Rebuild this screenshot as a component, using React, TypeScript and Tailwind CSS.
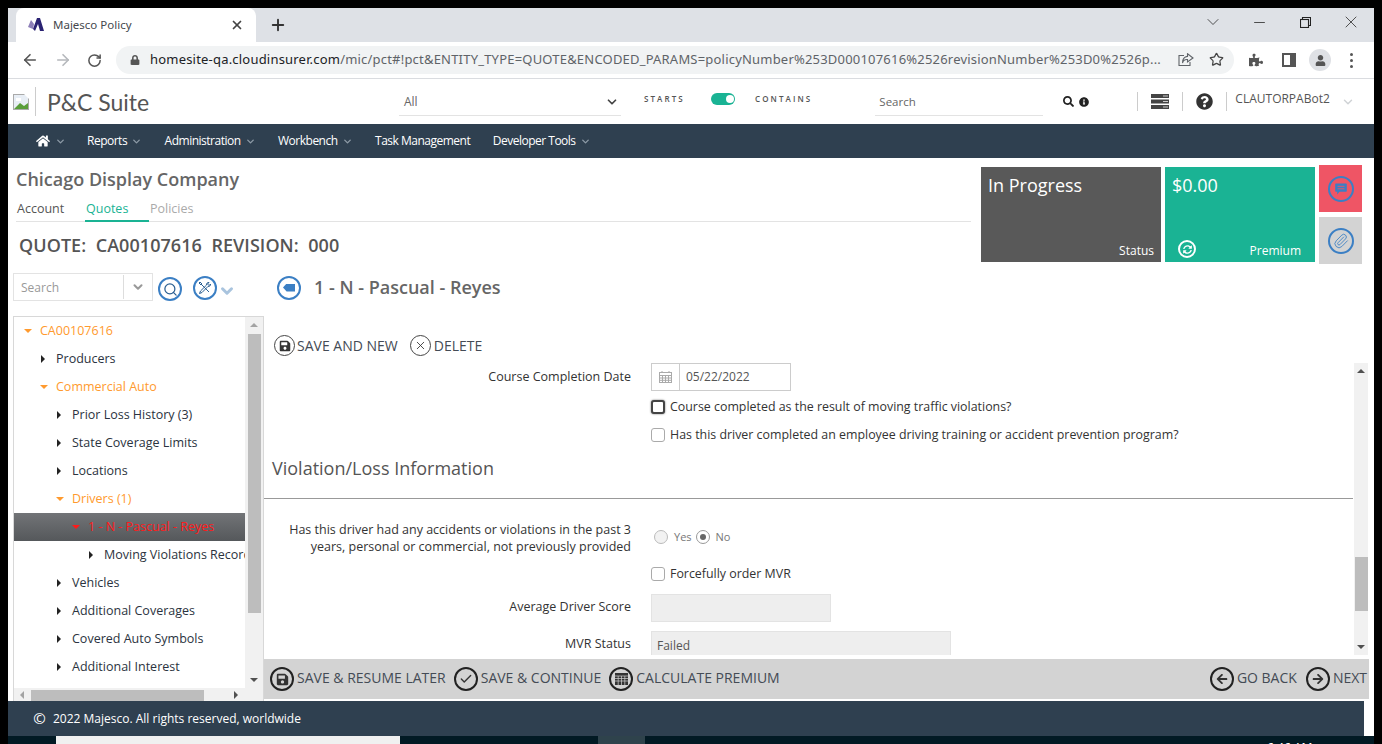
import type { ReactNode } from "react";
import { ArrowLeft, ArrowRight, ChevronDown, Minus, Paperclip, Plus, RotateCw, Star, X, Check, Search } from "lucide-react";
import { FaArrowLeft, FaArrowRight, FaHome, FaInfoCircle, FaLock, FaPuzzlePiece, FaQuestionCircle, FaSave, FaSearch, FaSyncAlt, FaUser } from "react-icons/fa";

const app = "font-['Open_Sans',sans-serif]";

function Caret({ open, color }: { open?: boolean; color?: string }) {
  if (open) {
    return <span className={`inline-block w-0 h-0 border-x-[4px] border-x-transparent border-t-[4px] ${color ?? "border-t-[#ff9a2e]"}`} />;
  }
  return <span className="inline-block w-0 h-0 border-y-[4px] border-y-transparent border-l-[4px] border-l-[#222]" />;
}

function TreeRow({ label, depth, open, active }: { label: string; depth: number; open?: boolean; active?: boolean }) {
  const pad = ["pl-[10px]", "pl-[26px]", "pl-[42px]", "pl-[58px]"][depth];
  const gap = open ? "w-[16px]" : "w-[16px] pl-[1px]";
  return (
    <div
      className={`h-[28px] flex items-center whitespace-nowrap ${pad} ${
        active
          ? "bg-gradient-to-b from-[#727477] to-[#55585b] text-[#ff1a1a]"
          : open
            ? "text-[#ff9a2e]"
            : "text-[#2b3340]"
      }`}
    >
      <span className={`${gap} shrink-0 flex items-center`}>
        <Caret open={open} color={active ? "border-t-[#ff1a1a]" : undefined} />
      </span>
      {label}
    </div>
  );
}

function RoundBtn({ children, label, small, className }: { children: ReactNode; label: string; small?: boolean; className?: string }) {
  return (
    <span className={`flex items-center text-[14px] text-[#444b55] whitespace-nowrap ${small ? "gap-[2px]" : "gap-[3px]"} ${className ?? ""}`}>
      <span
        className={`rounded-full flex items-center justify-center text-[#333] shrink-0 ${
          small ? "w-[21px] h-[21px] border-[1.5px] border-[#444]" : "w-[24px] h-[24px] border-[2.5px] border-[#222]"
        }`}
      >
        {children}
      </span>
      <span className={small ? "" : "pb-[4px]"}>{label}</span>
    </span>
  );
}

function BlueCircle({ children, size = "w-[24px] h-[24px]" }: { children: ReactNode; size?: string }) {
  return (
    <span className={`${size} rounded-full border-2 border-[#3b7fc4] flex items-center justify-center text-[#3b7fc4] shrink-0`}>
      {children}
    </span>
  );
}

function CheckRow({ label, focus }: { label: string; focus?: boolean }) {
  return (
    <div className="h-[28px] flex items-center gap-[5px] pl-[387px] text-[12.4px] text-[#333]">
      <span
        className={`w-[14px] h-[14px] rounded-[3px] bg-white ${
          focus ? "border-2 border-[#444] shadow-[0_0_2px_#666]" : "border border-[#aaa]"
        }`}
      />
      {label}
    </div>
  );
}

function NavItem({ label, caret = true }: { label: string; caret?: boolean }) {
  return (
    <span className="flex items-center gap-[4px] text-[12px] font-medium text-white whitespace-nowrap tracking-[-0.5px]">
      {label}
      {caret && <ChevronDown size={11} strokeWidth={3} className="text-[#8d9aa6]" />}
    </span>
  );
}

function BrowserChrome() {
  return (
    <div className="font-['Noto_Sans',sans-serif]">
      <div className="h-[34px] bg-[#dee1e6] flex items-end pl-2">
        <div className="w-[240px] h-[34px] bg-white rounded-t-lg flex items-center pl-[12px] pr-[12px] text-[11.5px] text-[#45484d]">
          <svg width="16" height="14" viewBox="0 0 16 14" className="mr-[9px]">
            <polygon points="0,9 3,2 6,6 5,11" fill="#8d7fb8" />
            <polygon points="5,11 9,0 12,0 16,13 12,13 10,6 7,13" fill="#2a2272" />
          </svg>
          <span className="flex-1">Majesco Policy</span>
          <X size={14} strokeWidth={3} className="text-[#444]" />
        </div>
        <Plus size={18} strokeWidth={2.5} className="text-[#333] ml-[13px] mb-[8px]" />
        <div className="flex-1" />
        <div className="flex items-center h-[34px] pb-[6px] text-[#333]">
          <ChevronDown size={20} strokeWidth={1} className="mr-[28px]" />
          <Minus size={17} strokeWidth={1.2} className="mr-[32px]" />
          <svg width="11" height="11" viewBox="0 0 11 11" fill="none" stroke="#222" strokeWidth="1.1" className="mr-[30px]">
            <rect x="0.5" y="2.5" width="8" height="8" />
            <path d="M2.5 2.5 V0.5 H10.5 V8.5 H8.5" />
          </svg>
          <X size={20} strokeWidth={1} className="mr-[13px]" />
        </div>
      </div>
      <div className="h-[37px] bg-white border-b border-[#dadce0] flex items-center pl-[13px] pr-[13px] text-[#5f6368]">
        <ArrowLeft size={18} strokeWidth={2.2} className="mr-[15px] text-[#555]" />
        <ArrowRight size={18} strokeWidth={2.2} className="mr-[15px] text-[#b5b8bc]" />
        <RotateCw size={15} strokeWidth={2.4} className="mr-[14px] text-[#555]" />
        <div className="w-[1118px] h-[28px] bg-[#f1f3f4] rounded-full flex items-center pl-[14px] pr-[10px] text-[13px] text-[#5f6368] mb-[1px]">
          <FaLock size={10} className="mr-[10px] text-[#555]" />
          <span className="flex-1 whitespace-nowrap tracking-[0.2px]">
            <span className="text-[#202124]">homesite-qa.cloudinsurer.com</span>/mic/pct#!pct&amp;ENTITY_TYPE=QUOTE&amp;ENCODED_PARAMS=policyNumber%253D000107616%2526revisionNumber%253D0%2526p...
          </span>
          <svg width="16" height="14" viewBox="0 0 16 14" fill="none" stroke="#5f6368" strokeWidth="1.1" className="ml-[14px] mr-[15px] shrink-0">
            <path d="M6 2.5 H1 V12.5 H12 V9" />
            <path d="M9.5 0.8 L15 5 L9.5 9 V6.6 C7 6.4 5 8 4.5 10 C4.5 6.5 6.5 3.8 9.5 3.4 Z" />
          </svg>
          <Star size={15} strokeWidth={2} className="text-[#444] shrink-0" />
        </div>
        <FaPuzzlePiece size={14} className="ml-[15px] text-[#555]" />
        <svg width="14" height="14" viewBox="0 0 14 14" className="ml-[19px] shrink-0">
          <rect x="1" y="1" width="12" height="12" fill="none" stroke="#555" strokeWidth="2" />
          <rect x="8" y="1" width="5" height="12" fill="#555" />
        </svg>
        <span className="ml-[13px] w-[22px] h-[22px] rounded-full bg-[#dfe1e5] flex items-center justify-center shrink-0">
          <FaUser size={11} className="text-[#555]" />
        </span>
        <span className="ml-[19px] flex flex-col gap-[3px]">
          <span className="w-[3px] h-[3px] rounded-full bg-[#555]" />
          <span className="w-[3px] h-[3px] rounded-full bg-[#555]" />
          <span className="w-[3px] h-[3px] rounded-full bg-[#555]" />
        </span>
      </div>
    </div>
  );
}

function AppHeader() {
  return (
    <div className="h-[45px] bg-white flex items-center pl-[5px]">
      <svg width="16" height="16" viewBox="0 0 16 16" className="shrink-0">
        <rect x="0.5" y="0.5" width="15" height="15" fill="#e8eef5" stroke="#aaa" />
        <path d="M1 15 L7 9 L11 12 L15 9 V15 Z" fill="#5a9e3a" />
        <path d="M3 4 H8 V7 H3 Z" fill="#fff" />
        <path d="M11 0 L16 0 L16 5 Z" fill="#fff" />
      </svg>
      <span className="w-px h-[29px] bg-[#ccc] ml-[6px]" />
      <span className="ml-[11px] font-['Lato',sans-serif] text-[23px] text-[#555] w-[352px] mt-[2px]">P&amp;C Suite</span>
      <div className="w-[222px] h-[28px] border-b border-[#e3e3e3] flex items-center justify-between pl-[5px] pr-[2px] pt-[1px] text-[12px] text-[#666] font-['Open_Sans',sans-serif]">
        All
        <ChevronDown size={14} strokeWidth={3} className="text-[#444]" />
      </div>
      <div className={`${app} flex items-center text-[8px] tracking-[2.1px] text-[#555] font-semibold mb-[5px]`}>
        <span className="ml-[23px] w-[67px]">STARTS</span>
        <span className="w-[24px] h-[12px] rounded-full bg-[#1ab394] flex items-center justify-end pr-[1px]">
          <span className="w-[8px] h-[8px] rounded-full bg-white" />
        </span>
        <span className="ml-[20px]">CONTAINS</span>
      </div>
      <div className={`${app} ml-[63px] w-[168px] h-[28px] border-b border-[#e3e3e3] flex items-center pl-[4px] pt-[1px] text-[11.5px] text-[#666]`}>Search</div>
      <FaSearch size={11} className="ml-[20px] text-[#222]" />
      <FaInfoCircle size={10} className="ml-[5px] text-[#222]" />
      <span className="w-px h-[19px] bg-[#ccc] ml-[48px]" />
      <svg width="18" height="15" viewBox="0 0 18 15" className="ml-[13px] shrink-0">
        <rect y="0" width="18" height="4" fill="#444" />
        <rect y="5.5" width="18" height="4" fill="#444" />
        <rect y="11" width="18" height="4" fill="#444" />
        <rect x="12" y="1.5" width="5" height="1" fill="#ccc" />
        <rect x="12" y="7" width="5" height="1" fill="#ccc" />
        <rect x="12" y="12.5" width="5" height="1" fill="#ccc" />
      </svg>
      <span className="w-px h-[19px] bg-[#ccc] ml-[13px]" />
      <FaQuestionCircle size={17} className="ml-[13px] text-[#333]" />
      <span className="w-px h-[19px] bg-[#ccc] ml-[13px]" />
      <span className={`${app} ml-[8px] text-[12px] text-[#555] mb-[6px]`}>CLAUTORPABot2</span>
      <ChevronDown size={14} strokeWidth={2.5} className="ml-[11px] text-[#d0d3d6]" />
    </div>
  );
}

function TopSummary() {
  return (
    <div className="h-[110px] flex shrink-0">
      <div className="w-[963px] pl-[8px] shrink-0">
        <div className="h-[15px]" />
        <div className="text-[18px] leading-[13px] h-[26px] font-semibold text-[#666] whitespace-nowrap">Chicago Display Company</div>
        <div className="h-[24px] border-b border-[#e3e3e3] flex text-[12.5px] items-stretch mt-[-1px]">
          <span className="w-[69px] pl-[1px] text-[#555] leading-[22px]">Account</span>
          <span className="w-[64px] pl-[1px] text-[#1ab394] font-medium border-b-2 border-[#1ab394] h-[24px] leading-[22px]">Quotes</span>
          <span className="pl-[1px] text-[#aaa] leading-[22px]">Policies</span>
        </div>
        <div className="pl-[3px] mt-[11px] text-[18px] leading-[24px] font-semibold text-[#555] whitespace-nowrap tracking-[0.06px]">QUOTE:&nbsp; CA00107616&nbsp; REVISION:&nbsp; 000</div>
      </div>
      <div className="ml-[10px] flex gap-[4px]">
        <div className="w-[180px] h-[95px] mt-[9px] bg-[#595959] text-white px-[7px] pt-[6px] pb-[7px] flex flex-col justify-between">
          <span className="text-[18px] leading-[24px]">In Progress</span>
          <span className="self-end text-[12px] leading-[16px] mb-[-4px]">Status</span>
        </div>
        <div className="w-[150px] h-[95px] mt-[9px] bg-[#1ab394] text-white px-[7px] pt-[6px] pb-[7px] flex flex-col justify-between">
          <span className="text-[18px] leading-[24px]">$0.00</span>
          <span className="flex items-end justify-between text-[12px] pl-[6px] pr-[7px] mb-[-3px]">
            <span className="w-[18px] h-[18px] rounded-full border-2 border-white flex items-center justify-center">
              <FaSyncAlt size={9} />
            </span>
            <span className="leading-[14px]">Premium</span>
          </span>
        </div>
        <div className="flex flex-col gap-[5px] mt-[7px]">
          <div className="w-[43px] h-[47px] bg-[#ef5565] flex items-center justify-center">
            <BlueCircle size="w-[26px] h-[26px]">
              <svg width="12" height="12" viewBox="0 0 12 12">
                <path d="M1 0.5 H11 A0.8 0.8 0 0 1 11.8 1.3 V8 A0.8 0.8 0 0 1 11 8.8 H4.5 L2.2 11.5 V8.8 H1 A0.8 0.8 0 0 1 0.2 8 V1.3 A0.8 0.8 0 0 1 1 0.5 Z" fill="#3b7fc4" />
                <path d="M2.5 3.3 H9.5 M2.5 5.8 H9.5" stroke="#ef5565" strokeWidth="0.9" />
              </svg>
            </BlueCircle>
          </div>
          <div className="w-[43px] h-[47px] bg-[#d3d3d3] flex items-center justify-center">
            <BlueCircle size="w-[26px] h-[26px]"><Paperclip size={16} strokeWidth={1.3} /></BlueCircle>
          </div>
        </div>
      </div>
    </div>
  );
}

function Sidebar() {
  return (
    <div className="w-[256px] shrink-0 pl-[5px] flex flex-col">
      <div className="h-[48px] pt-[5px] flex items-start">
        <div className="w-[140px] h-[28px] border border-[#e3e3e3] flex items-center text-[12px] text-[#999]">
          <span className="flex-1 pl-[7px] pt-[1px]">Search</span>
          <span className="w-px h-[24px] bg-[#ddd]" />
          <span className="w-[28px] flex justify-center"><ChevronDown size={14} strokeWidth={3.5} className="text-[#999]" /></span>
        </div>
        <span className="ml-[5px] mt-[4px]"><BlueCircle><Search size={15} strokeWidth={2} className="text-[#2b5f92]" /></BlueCircle></span>
        <span className="ml-[11px] mt-[3px]">
          <BlueCircle>
            <svg width="14" height="14" viewBox="0 0 14 14" fill="none" stroke="#2b5f92" strokeWidth="1">
              <path d="M3 3 L11 11 M2 1 L1 2 L3 4 L4 3 Z" />
              <path d="M11 1.5 C9.5 1.2 8.2 2.5 8.6 4 L2.5 10 L1.5 12.5 L4 11.5 L10 5.4 C11.5 5.8 12.8 4.5 12.5 3 L11 4.5 L9.5 3 Z" />
            </svg>
          </BlueCircle>
        </span>
        <ChevronDown size={18} strokeWidth={4} className="mt-[9px] ml-[1px] text-[#a9c4de]" />
      </div>
      <div className="h-[385px] w-[251px] border border-b-0 border-[#d8d8d8] flex flex-col text-[12.5px] font-normal">
        <div className="flex-1 flex min-h-0">
          <div className="w-[231px] overflow-hidden">
            <TreeRow label="CA00107616" depth={0} open />
            <TreeRow label="Producers" depth={1} />
            <TreeRow label="Commercial Auto" depth={1} open />
            <TreeRow label="Prior Loss History (3)" depth={2} />
            <TreeRow label="State Coverage Limits" depth={2} />
            <TreeRow label="Locations" depth={2} />
            <TreeRow label="Drivers (1)" depth={2} open />
            <TreeRow label="1 - N - Pascual - Reyes" depth={3} open active />
            <div className="pl-[16px]"><TreeRow label="Moving Violations Records" depth={3} /></div>
            <TreeRow label="Vehicles" depth={2} />
            <TreeRow label="Additional Coverages" depth={2} />
            <TreeRow label="Covered Auto Symbols" depth={2} />
            <TreeRow label="Additional Interest" depth={2} />
          </div>
          <div className="w-[18px] bg-[#f1f1f1] flex flex-col items-center pt-[6px] pb-[6px]">
            <span className="w-0 h-0 border-x-[4px] border-x-transparent border-b-[4px] border-b-[#a3a3a3]" />
            <span className="w-[13px] h-[279px] bg-[#bdbdbd] mt-[7px]" />
            <span className="flex-1" />
            <span className="w-0 h-0 border-x-[4px] border-x-transparent border-t-[4px] border-t-[#505050]" />
          </div>
        </div>
        <div className="h-[13px] bg-[#f1f1f1] flex items-center pl-[6px] shrink-0">
          <span className="w-0 h-0 border-y-[4px] border-y-transparent border-r-[4px] border-r-[#a3a3a3]" />
          <span className="w-[173px] h-[11px] mt-[2px] bg-[#bdbdbd] ml-[7px]" />
          <span className="w-0 h-0 ml-[30px] border-y-[4px] border-y-transparent border-l-[4px] border-l-[#505050]" />
        </div>
      </div>
    </div>
  );
}

function Field({ label, children, className, labelClass }: { label: ReactNode; children: ReactNode; className?: string; labelClass?: string }) {
  return (
    <div className={`flex ${className ?? "items-center"}`}>
      <div className={`w-[367px] text-right text-[12.5px] leading-[17px] text-[#333] shrink-0 ${labelClass ?? ""}`}>{label}</div>
      <div className="ml-[20px]">{children}</div>
    </div>
  );
}

function FormPanel() {
  return (
    <div className="flex-1 min-w-0 flex flex-col">
      <div className="h-[39px] pl-[13px] flex items-center">
        <BlueCircle><span className="w-[12px] h-[8px] bg-[#3b7fc4] [clip-path:polygon(30%_0,100%_0,100%_100%,30%_100%,0_50%)]" /></BlueCircle>
        <span className="ml-[13px] text-[18px] font-semibold text-[#666] mb-[1px]">1 - N - Pascual - Reyes</span>
      </div>
      <div className="h-[56px] flex items-end pb-[7px] pl-[10px] gap-[12px]">
        <RoundBtn small label="SAVE AND NEW"><FaSave size={12} /></RoundBtn>
        <RoundBtn small label="DELETE" className="gap-[3px]"><X size={13} strokeWidth={1.6} /></RoundBtn>
      </div>
      <div className="h-[292px] w-[1104px] flex">
        <div className="w-[1090px] overflow-hidden">
          <Field label="Course Completion Date" className="items-center h-[28px] mb-[2px]" labelClass="pb-[2px]">
            <div className="w-[140px] h-[28px] border border-[#ccc] flex items-center text-[12px] text-[#555]">
              <span className="w-[28px] h-full border-r border-[#ccc] flex items-center justify-center text-[#aaa]">
                <svg width="13" height="12" viewBox="0 0 13 12" fill="none" stroke="#aaa" strokeWidth="1">
                  <rect x="0.5" y="1.5" width="12" height="10" />
                  <path d="M0.5 4.5 H12.5 M0.5 7 H12.5 M0.5 9.3 H12.5 M3.5 4.5 V11.5 M6.5 4.5 V11.5 M9.5 4.5 V11.5 M3 0 V2 M10 0 V2" />
                </svg>
              </span>
              <span className="pl-[6px]">05/22/2022</span>
            </div>
          </Field>
          <CheckRow label="Course completed as the result of moving traffic violations?" focus />
          <CheckRow label="Has this driver completed an employee driving training or accident prevention program?" />
          <div className="h-[49px] pl-[8px] pt-[7px] text-[18px] leading-[24px] text-[#555]">Violation/Loss Information</div>
          <div className="h-px bg-[#999] w-[1089px]" />
          <Field label={<>Has this driver had any accidents or violations in the past 3<br />years, personal or commercial, not previously provided</>} className="items-start h-[61px] pt-[22px]">
            <div className="flex items-center text-[11px] text-[#777] mt-[8px] pl-[3px]">
              <span className="w-[14px] h-[14px] rounded-full border border-[#bbb] bg-[#f2f2f2]" />
              <span className="ml-[6px]">Yes</span>
              <span className="ml-[4px] w-[14px] h-[14px] rounded-full border border-[#999] flex items-center justify-center">
                <span className="w-[6px] h-[6px] rounded-full bg-[#666]" />
              </span>
              <span className="ml-[6px]">No</span>
            </div>
          </Field>
          <CheckRow label="Forcefully order MVR" />
          <Field label="Average Driver Score" className="items-center h-[28px] mt-[6px]" labelClass="pb-[4px]">
            <div className="w-[180px] h-[28px] bg-[#eee] border border-[#e3e3e3]" />
          </Field>
          <Field label="MVR Status" className="items-center h-[28px] mt-[9px]" labelClass="pb-[4px]">
            <div className="w-[300px] h-[28px] bg-[#eee] border border-[#e3e3e3] text-[12px] text-[#555] pl-[5px] leading-[28px]">Failed</div>
          </Field>
        </div>
        <div className="w-[14px] bg-[#f1f1f1] flex flex-col items-center pt-[6px] pb-[6px]">
          <span className="w-0 h-0 border-x-[4px] border-x-transparent border-b-[4px] border-b-[#505050]" />
          <span className="w-[13px] h-[54px] bg-[#bdbdbd] mt-[184px]" />
          <span className="flex-1" />
          <span className="w-0 h-0 border-x-[4px] border-x-transparent border-t-[4px] border-t-[#505050]" />
        </div>
      </div>
      <div className="h-[4px]" />
      <div className="h-[40px] w-[1105px] bg-[#d3d3d3] flex items-center pl-[6px] pr-[2px]">
        <RoundBtn label="SAVE & RESUME LATER" className="mr-[8px]"><FaSave size={13} /></RoundBtn>
        <RoundBtn label="SAVE & CONTINUE" className="mr-[8px]"><Check size={14} strokeWidth={2.4} /></RoundBtn>
        <RoundBtn label="CALCULATE PREMIUM">
          <svg width="13" height="12" viewBox="0 0 13 12">
            <rect width="13" height="12" fill="#333" />
            <path d="M0 3 H13 M0 5.5 H13 M0 8 H13 M3.2 3 V12 M6.5 3 V12 M9.8 3 V12" stroke="#d3d3d3" strokeWidth="0.7" />
          </svg>
        </RoundBtn>
        <span className="flex-1" />
        <RoundBtn label="GO BACK" className="mr-[9px]"><FaArrowLeft size={12} /></RoundBtn>
        <RoundBtn label="NEXT"><FaArrowRight size={12} /></RoundBtn>
      </div>
    </div>
  );
}

export default function App() {
  return (
    <div className="w-[1382px] h-[744px] bg-black overflow-hidden flex flex-col pt-[8px]">
      <div className="ml-[8px] w-[1366px] flex-1 bg-white flex flex-col min-h-0">
        <BrowserChrome />
        <AppHeader />
        <div className="h-[34px] bg-[#2f4050] flex items-center pl-[28px] font-['Open_Sans',sans-serif]">
          <FaHome size={14} className="text-white" />
          <ChevronDown size={11} strokeWidth={3} className="text-[#8d9aa6] ml-[5px] mr-[21px]" />
          <span className="flex gap-[22.5px]">
            <NavItem label="Reports" />
            <NavItem label="Administration" />
            <NavItem label="Workbench" />
            <NavItem label="Task Management" caret={false} />
            <NavItem label="Developer Tools" />
          </span>
        </div>
        <div className={`${app} h-[543px] flex flex-col`}>
          <TopSummary />
          <div className="flex h-[433px]">
            <Sidebar />
            <FormPanel />
          </div>
        </div>
        <div className="h-[35px] w-[1356px] bg-[#2f4050] flex items-center pl-[24px] text-[12px] font-medium text-white font-['Open_Sans',sans-serif]">
          <span className="w-[15px] h-[15px] flex items-center justify-center text-[15px] mr-[6px]">©</span>
          2022 Majesco. All rights reserved, worldwide
        </div>
      </div>
      <div className="h-[8px] bg-[#021a24] ml-[8px] w-[1366px] flex overflow-hidden shrink-0 text-white text-[12px] font-['Noto_Sans',sans-serif]">
        <span className="w-[48px]" />
        <span className="w-[344px] bg-[#f0f0f0]" />
        <span className="w-[198px]" />
        <span className="w-[47px] bg-[#2f434c]" />
        <span className="ml-[622px] leading-[14px] pt-[5px]">6:46 AM</span>
      </div>
    </div>
  );
}
